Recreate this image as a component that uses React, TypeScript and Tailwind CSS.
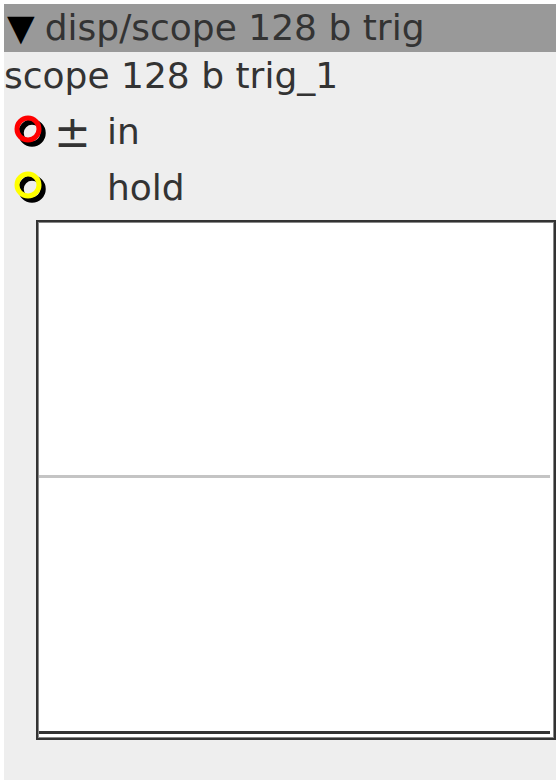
import React from "react";

function Ring({ color }: { color: string }) {
  return (
    <svg width="50" height="44" viewBox="0 0 50 44" className="shrink-0">
      <circle cx="28" cy="23" r="11" fill="none" stroke="#000" strokeWidth="5.5" />
      <circle cx="24" cy="19" r="11" fill="none" stroke={color} strokeWidth="5" />
    </svg>
  );
}

export default function App() {
  return (
    <div
      className="bg-white p-1 h-[784px] w-[560px]"
      style={{ fontFamily: '"DejaVu Sans", sans-serif' }}
    >
      <div className="bg-[#eeeeee] w-[552px] h-[776px] flex flex-col text-[#333333]">
        <div className="h-[48px] bg-[#999999] text-[36px] leading-[48px] pl-[3px] whitespace-nowrap flex">
          <span className="text-black text-[36px] leading-[48px]">▼</span>
          <span className="pl-[10px]">disp/scope 128 b trig</span>
        </div>
        <div className="h-[52px] text-[36px] leading-[48px] whitespace-nowrap">
          scope 128 b trig_1
        </div>
        <div className="h-[56px] flex items-center">
          <Ring color="#ff0000" />
          <div className="w-[53px] text-[44px] leading-[56px]">±</div>
          <div className="text-[36px] leading-[56px]">in</div>
        </div>
        <div className="h-[56px] flex items-center">
          <Ring color="#ffff00" />
          <div className="w-[53px]"></div>
          <div className="text-[36px] leading-[56px]">hold</div>
        </div>
        <div className="ml-[32px] mt-[4px] w-[520px] h-[520px] border-2 border-[#333333] shadow-[inset_0_0_0_1px_#888888] bg-white p-[1px]">
          <div className="flex flex-col h-full">
            <div className="h-[252px]" />
            <div className="h-[3px] bg-[#c4c4c4] mr-[3px]" />
            <div className="flex-1" />
            <div className="h-[3px] bg-[#333333] mr-[3px] mb-[3px]" />
          </div>
        </div>
      </div>
    </div>
  );
}
